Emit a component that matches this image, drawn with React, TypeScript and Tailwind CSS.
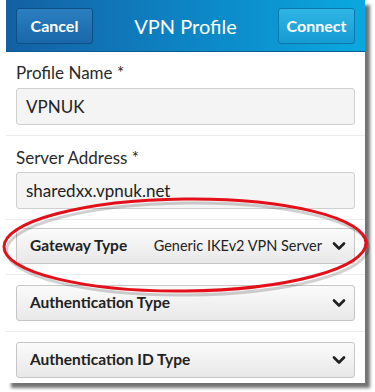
import React from "react";

const Chevron = () => (
  <svg width="14" height="10" viewBox="0 0 14 10" className="shrink-0">
    <path d="M2 2.5 L7 7.5 L12 2.5" fill="none" stroke="#1f1f1f" strokeWidth="2.6" strokeLinecap="round" strokeLinejoin="round" />
  </svg>
);

const Dropdown = ({ label, value }: { label: string; value?: string }) => (
  <div className="h-[36px] flex items-center rounded-[3px] border border-[#c6c6c6] bg-gradient-to-b from-[#fbfbfb] to-[#e8e8e8] pl-[13px] pr-[8px] whitespace-nowrap">
    <span className="font-bold text-[15.5px] text-[#222]">{label}</span>
    <span className="flex-1 text-right text-[14.5px] text-[#222] pr-[10px]">{value ?? ""}</span>
    <Chevron />
  </div>
);

const Input = ({ value }: { value: string }) => (
  <div className="h-[37px] flex items-center rounded-[3px] border border-[#cfcfcf] bg-[#f4f4f4] px-[9px] text-[17px] text-[#222]">
    {value}
  </div>
);

export default function App() {
  return (
    <div className="relative w-[375px] h-[392px] bg-white overflow-hidden" style={{ fontFamily: "Lato, 'Open Sans', sans-serif" }}>
      <div className="ml-[6px] w-[359px] h-[383px] bg-white shadow-[5px_5px_3px_rgba(0,0,0,0.55)] flex flex-col">
        <div className="h-[52px] flex items-center justify-between px-[10px] bg-gradient-to-r from-[#1360a3] via-[#0d84c4] to-[#0aa8df] border-b border-[#0b5c94]">
          <div className="w-[77px] h-[36px] flex items-center justify-center rounded-[3px] border border-[#0d4f86] bg-gradient-to-b from-[#2a7fc0] to-[#1967a8] text-white font-bold text-[16px]">
            Cancel
          </div>
          <div className="text-white text-[20px]">VPN Profile</div>
          <div className="w-[77px] h-[36px] flex items-center justify-center rounded-[3px] border border-[#0d78ad] bg-gradient-to-b from-[#2fb5e4] to-[#149bd2] text-white font-bold text-[16px]">
            Connect
          </div>
        </div>
        <div className="px-[10px] pt-[7px] pb-[10px] border-b border-[#ececec]">
          <div className="h-[27px] leading-[27px] text-[17px] text-[#2a2a2a] mb-[2px]">Profile Name *</div>
          <Input value="VPNUK" />
        </div>
        <div className="px-[10px] pt-[8px] pb-[10px] border-b border-[#ececec]">
          <div className="h-[27px] leading-[27px] text-[17px] text-[#2a2a2a] mb-[1px]">Server Address *</div>
          <Input value="sharedxx.vpnuk.net" />
        </div>
        <div className="px-[10px] pt-[8px] pb-[10px] border-b border-[#ececec]">
          <Dropdown label="Gateway Type" value="Generic IKEv2 VPN Server" />
        </div>
        <div className="px-[10px] pt-[10px] pb-[10px] border-b border-[#ececec]">
          <Dropdown label="Authentication Type" />
        </div>
        <div className="px-[10px] pt-[10px] pb-[5px]">
          <Dropdown label="Authentication ID Type" />
        </div>
      </div>
      <svg className="absolute left-0 top-0 pointer-events-none" width="375" height="392" viewBox="0 0 375 392">
        <ellipse cx="186" cy="247" rx="181" ry="46" fill="none" stroke="rgba(0,0,0,0.18)" strokeWidth="3" transform="translate(1.5 2) rotate(-0.6 186 247)" />
        <ellipse cx="185" cy="245" rx="181" ry="46" fill="none" stroke="#e3101a" strokeWidth="3" transform="rotate(-0.6 185 245)" />
      </svg>
    </div>
  );
}
